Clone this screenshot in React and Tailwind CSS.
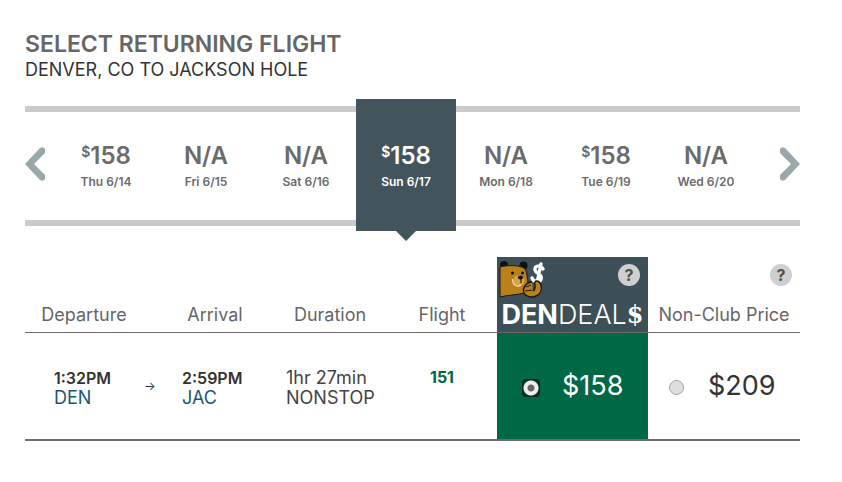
import React, { useState } from 'react';
import clsx from 'clsx';

const days = [
  { id: 'thu', label: 'Thu 6/14', price: 158 },
  { id: 'fri', label: 'Fri 6/15', price: null },
  { id: 'sat', label: 'Sat 6/16', price: null },
  { id: 'sun', label: 'Sun 6/17', price: 158 },
  { id: 'mon', label: 'Mon 6/18', price: null },
  { id: 'tue', label: 'Tue 6/19', price: 158 },
  { id: 'wed', label: 'Wed 6/20', price: null },
];

const Chevron = ({ d }) => (
  <svg viewBox="0 0 20 34" className="w-5 h-[34px]" fill="#9ba8ab">
    <path d={d} />
  </svg>
);

const DayTile = ({ day, selected, onSelect }) => (
  <button
    onClick={onSelect}
    aria-pressed={selected}
    className={clsx(
      'relative flex-1 -mt-[13px] -mb-[11px] pt-0.5 flex flex-col items-center justify-center font-semibold',
      selected ? 'bg-[#43555c] text-white' : 'text-[#6b6b6b]'
    )}
  >
    <span className="flex items-start text-2xl leading-8">
      {day.price ? (
        <>
          <span className="text-sm leading-6">$</span>
          {day.price}
        </>
      ) : (
        'N/A'
      )}
    </span>
    <span className="text-xs leading-5">{day.label}</span>
    {selected && (
      <span className="absolute top-full left-1/2 -translate-x-1/2 border-x-[10px] border-t-[10px] border-x-transparent border-t-[#43555c]" />
    )}
  </button>
);

const HelpButton = ({ label }) => (
  <button
    aria-label={label}
    className="absolute top-[7px] right-2 w-[22px] h-[22px] rounded-full bg-[#cfcfcf] text-[#505050] text-base leading-[22px] font-bold"
  >
    ?
  </button>
);

const Bear = () => (
  <svg viewBox="0 0 48 40" className="block w-12 h-10">
    <circle cx="5" cy="4" r="4" fill="#111" />
    <circle cx="24.5" cy="4.5" r="4" fill="#111" />
    <path
      d="M1 6C8 4 20 4 25 7C28 10 28 15 29 22L26 32C18 34 8 34 1 36Z"
      fill="#b9811c"
      stroke="#171717"
      strokeWidth="1"
    />
    <circle cx="13.5" cy="12" r="1.5" fill="#111" />
    <circle cx="23.5" cy="12" r="1.5" fill="#111" />
    <circle cx="20" cy="19.5" r="5.5" fill="#dba145" />
    <ellipse cx="21.5" cy="16.5" rx="2.6" ry="2" fill="#111" />
    <path d="M13.5 18C13.5 24 18 27 22 24" fill="none" stroke="#f3e3c0" strokeWidth="1.2" />
    <path d="M22 18V22" stroke="#111" strokeWidth="1" />
    <path
      d="M44 8C42 4 35 4 36 9C37 13 44 13 42 18C41 22 34 21 33 17M42 3L38 22"
      fill="none"
      stroke="#fff"
      strokeWidth="3.4"
      strokeLinecap="round"
    />
    <path
      d="M33 21C27 21 23 28 25 32C27 36 33 37 37 35C42 33 43 28 42 24C41 20 37 19 36 21C35 24 38 27 34 30"
      fill="#b9811c"
      stroke="#171717"
      strokeWidth="1.4"
    />
    <path d="M27 26L32 24M26 30L33 29" stroke="#171717" strokeWidth="1" />
  </svg>
);

const App = () => {
  const [day, setDay] = useState('sun');
  const [fare, setFare] = useState('deal');

  return (
    <main className="pt-7 pl-[25px] pr-[42px] font-['Inter',sans-serif] text-[#333]">
      <h1 className="text-[23px] leading-8 font-semibold text-[#666]">SELECT RETURNING FLIGHT</h1>
      <p className="text-lg leading-5">DENVER, CO TO JACKSON HOLE</p>

      {/* Date strip */}
      <nav className="mt-[26px] h-[120px] flex border-y-[6px] border-[#cbcbcb]">
        <button aria-label="Previous dates" className="w-[31px] flex items-center pb-1">
          <Chevron d="M0 17L15 1Q18 -1 20 2V6L9 17L20 28V32Q18 35 15 33Z" />
        </button>
        {days.map((d) => (
          <DayTile key={d.id} day={d} selected={d.id === day} onSelect={() => setDay(d.id)} />
        ))}
        <button aria-label="Next dates" className="w-11 flex items-center justify-end pb-1">
          <Chevron d="M20 17L5 1Q2 -1 0 2V6L11 17L0 28V32Q2 35 5 33Z" />
        </button>
      </nav>

      {/* Flights */}
      <table className="mt-[31px] w-full table-fixed border-collapse">
        <colgroup>
          <col className="w-[118px]" />
          <col className="w-[14px]" />
          <col className="w-[116px]" />
          <col className="w-[114px]" />
          <col className="w-[110px]" />
          <col className="w-[151px]" />
          <col className="w-[152px]" />
        </colgroup>
        <thead>
          <tr className="h-[75px] border-b border-[#6b6b6b] text-lg leading-5 text-[#666]">
            <th className="p-0 pb-[7px] align-bottom font-normal">Departure</th>
            <td />
            <th className="p-0 pb-[7px] align-bottom font-normal">Arrival</th>
            <th className="p-0 pb-[7px] align-bottom font-normal">Duration</th>
            <th className="p-0 pb-[7px] align-bottom font-normal">Flight</th>
            <th className="relative p-0 align-top bg-[#3d4f57] text-white">
              <div className="pt-1 pl-0.5">
                <Bear />
              </div>
              <div className="flex justify-center text-[27px] leading-7 whitespace-nowrap">
                <span className="font-bold">DEN</span>
                <span className="font-light">DEAL</span>
                <span className="font-['DejaVu_Serif',serif] text-2xl leading-7 font-bold">$</span>
              </div>
              <HelpButton label="About Den Deals" />
            </th>
            <th className="relative p-0 pb-[7px] align-bottom font-normal">
              Non-Club Price
              <HelpButton label="About the non-club price" />
            </th>
          </tr>
        </thead>
        <tbody>
          <tr className="h-[108px] border-b-2 border-[#6b6b6b] text-lg leading-5">
            <td className="pt-1 pl-[29px]">
              <div className="text-base leading-5 font-semibold">1:32PM</div>
              <a href="#den" className="block text-[#1c5670]">DEN</a>
            </td>
            <td className="p-0 text-center text-xs">→</td>
            <td className="pt-1 pl-[25px]">
              <div className="text-base leading-5 font-semibold">2:59PM</div>
              <a href="#jac" className="block text-[#1c5670]">JAC</a>
            </td>
            <td className="p-0 pt-1 pl-[13px] text-[#444]">
              <div>1hr 27min</div>
              <div>NONSTOP</div>
            </td>
            <td className="pt-[34px] align-top text-center text-base leading-5 font-bold text-[#006845]">151</td>
            <td className="p-0 bg-[#006845] text-white">
              <label className="flex items-center pl-[25px] gap-[22px] text-[27px] leading-10">
                <input
                  type="radio"
                  name="fare"
                  checked={fare === 'deal'}
                  onChange={() => setFare('deal')}
                  className="appearance-none w-[18px] h-[18px] mt-1 rounded-sm bg-[radial-gradient(circle,#666_0_3px,#eee_4px_7px,#0b2c21_8px)]"
                />
                $158
              </label>
            </td>
            <td className="p-0">
              <label className="flex items-center pl-[21px] gap-6 text-[27px] leading-10">
                <input
                  type="radio"
                  name="fare"
                  checked={fare === 'regular'}
                  onChange={() => setFare('regular')}
                  className="appearance-none w-[15px] h-[15px] mt-1 rounded-full border border-[#a3a3a3] bg-[#dedede] checked:bg-[#666]"
                />
                $209
              </label>
            </td>
          </tr>
        </tbody>
      </table>
    </main>
  );
};

export default App;
